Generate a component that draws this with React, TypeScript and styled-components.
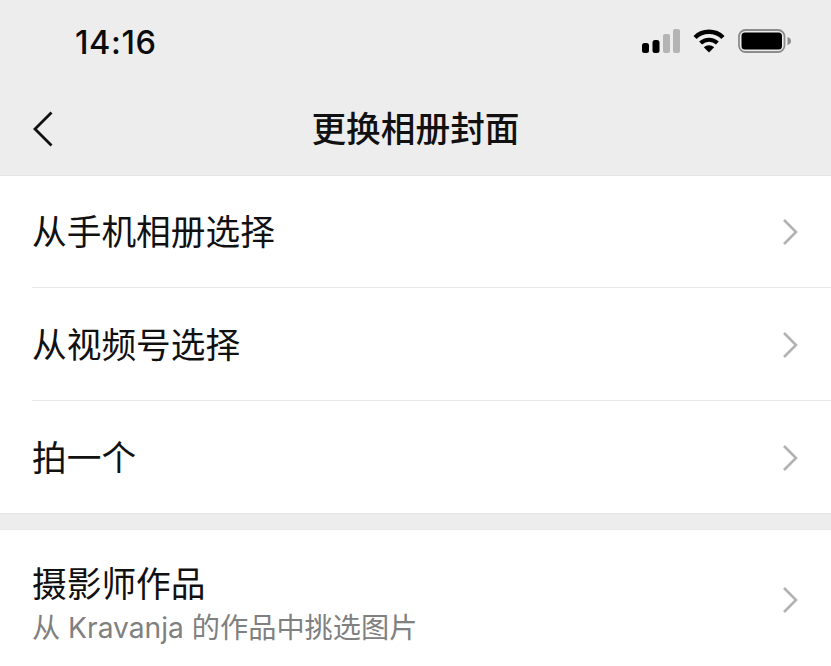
import React from "react"
import styled, { createGlobalStyle } from "styled-components"

const GlobalStyle = createGlobalStyle`
  html, body {
    margin: 0;
    padding: 0;
    background: #fff;
  }
  body {
    font-family: "Inter", "Noto Sans CJK SC", sans-serif;
  }
`

const Page = styled.div`
  width: 831px;
  height: 666px;
  overflow: hidden;
  background: #fff;
`

const Header = styled.header`
  height: 176px;
  background: #ededed;
  border-bottom: 1px solid #e4e4e4;
  box-sizing: border-box;
  display: flex;
  flex-direction: column;
`

const StatusBar = styled.div`
  height: 84px;
  display: flex;
  align-items: center;
  justify-content: space-between;
  padding: 0 39px 0 75px;
`

const Clock = styled.span`
  font-size: 32.5px;
  font-weight: 500;
  color: #0c0c0c;
  letter-spacing: 0.6px;
`

const StatusIcons = styled.div`
  display: flex;
  align-items: center;
  gap: 13px;
  margin-bottom: 2px;
`

const NavBar = styled.nav`
  height: 91px;
  display: flex;
  align-items: center;
  padding: 0 32px 2px;
  box-sizing: border-box;
`

const NavTitle = styled.h1`
  margin: 0 0 4px;
  flex: 1;
  text-align: center;
  font-size: 34.7px;
  font-weight: 500;
  color: #111;
  padding-right: 22px;
`

const Row = styled.div<{ $height: number; $nudge: number; $divided?: boolean }>`
  height: ${(p) => p.$height}px;
  margin-left: 32px;
  padding: ${(p) => p.$nudge}px 32px 0 0;
  display: flex;
  align-items: center;
  justify-content: space-between;
  box-sizing: border-box;
  border-bottom: 1px solid ${(p) => (p.$divided ? "#e9e9e9" : "transparent")};
`

const Labels = styled.div`
  display: flex;
  flex-direction: column;
  margin-top: 8px;
`

const Label = styled.span`
  font-size: 34.7px;
  line-height: 48px;
  color: #111;
`

const SubLabel = styled.span`
  font-size: 28.2px;
  line-height: 40px;
  color: #808080;
`

const Divider = styled.div`
  height: 17px;
  background: #ededed;
  border-top: 1px solid #e4e4e4;
  border-bottom: 1px solid #e9e9e9;
  box-sizing: border-box;
`

const Chevron = () => (
  <svg width="18" height="28" viewBox="0 0 18 28">
    <path d="M3 2 L15 14 L3 26" fill="none" stroke="#b2b2b2" strokeWidth="2.6" />
  </svg>
)

const BackIcon = () => (
  <svg width="22" height="36" viewBox="0 0 22 36">
    <path d="M19.5 1.5 L3 18 L19.5 34.5" fill="none" stroke="#111" strokeWidth="2.8" />
  </svg>
)

const SignalIcon = () => (
  <svg width="38" height="24" viewBox="0 0 38 24">
    <rect x="0" y="14" width="7" height="10" rx="2.5" fill="#000" />
    <rect x="10.5" y="11" width="7" height="13" rx="2.5" fill="#000" />
    <rect x="21" y="5" width="7" height="19" rx="2" fill="#b4b4b4" />
    <rect x="31" y="0" width="7" height="24" rx="2" fill="#b4b4b4" />
  </svg>
)

const WifiIcon = () => (
  <svg width="32" height="24" viewBox="0 0 32 24">
    <path d="M2 8.5 A20 20 0 0 1 30 8.5" fill="none" stroke="#000" strokeWidth="4.4" />
    <path d="M7.6 14 A12.5 12.5 0 0 1 24.4 14" fill="none" stroke="#000" strokeWidth="4.2" />
    <path d="M16 23.5 L10.8 18.2 A7.6 7.6 0 0 1 21.2 18.2 Z" fill="#000" />
  </svg>
)

const BatteryIcon = () => (
  <svg width="54" height="24" viewBox="0 0 54 24">
    <rect x="1" y="1" width="45.5" height="22" rx="6.5" fill="none" stroke="#8c8c8c" strokeWidth="1.8" />
    <rect x="3.5" y="3.5" width="40.5" height="17" rx="3.5" fill="#000" />
    <path d="M49.5 8 C52 8.8 53 10 53 12 C53 14 52 15.2 49.5 16 Z" fill="#8c8c8c" />
  </svg>
)

const rows = [
  { text: "从手机相册选择", height: 112, nudge: 1, divided: true },
  { text: "从视频号选择", height: 113, nudge: 2, divided: true },
  { text: "拍一个", height: 112, nudge: 2, divided: false },
]

export default function App() {
  return (
    <Page>
      <GlobalStyle />
      <Header>
        <StatusBar>
          <Clock>14:16</Clock>
          <StatusIcons>
            <SignalIcon />
            <WifiIcon />
            <BatteryIcon />
          </StatusIcons>
        </StatusBar>
        <NavBar>
          <BackIcon />
          <NavTitle>更换相册封面</NavTitle>
        </NavBar>
      </Header>
      {rows.map((row) => (
        <Row key={row.text} $height={row.height} $nudge={row.nudge} $divided={row.divided}>
          <Label>{row.text}</Label>
          <Chevron />
        </Row>
      ))}
      <Divider />
      <Row $height={137} $nudge={3}>
        <Labels>
          <Label>摄影师作品</Label>
          <SubLabel>从 Kravanja 的作品中挑选图片</SubLabel>
        </Labels>
        <Chevron />
      </Row>
    </Page>
  )
}
